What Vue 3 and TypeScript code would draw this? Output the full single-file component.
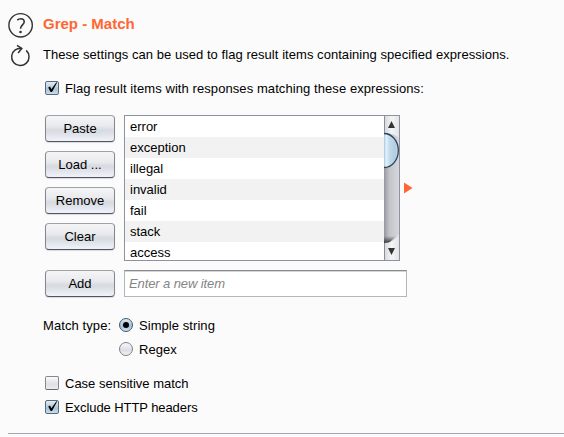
<script setup lang="ts">
import { ref } from 'vue'

const items: string[] = ['error', 'exception', 'illegal', 'invalid', 'fail', 'stack', 'access']
const actions: string[] = ['Paste', 'Load ...', 'Remove', 'Clear']
const flagItems = ref(true)
const caseSensitive = ref(false)
const excludeHeaders = ref(true)
const matchType = ref<'simple' | 'regex'>('simple')
const newItem = ref('')
const tick = 'M3.2 6.4 5 5.6 6.4 8.3 11.2 1.4 12.3 1.3 7 11 5.6 11Z'
</script>

<template>
  <main class="panel">
    <aside class="tools">
      <svg class="help" width="26" height="26" viewBox="0 0 26 26" fill="none" stroke="#333">
        <circle cx="12.6" cy="13.3" r="11.7" stroke-width="1.4" />
        <path d="M9.3 8.1C10.2 7.2 11.2 6.8 12.7 6.8c2.2 0 3.5 1.1 3.5 3 0 3-3.7 3.3-3.7 6.9" stroke-width="1.6" />
        <circle cx="12.5" cy="20" r="1.3" fill="#333" stroke="none" />
      </svg>
      <svg class="reset" width="22" height="23" viewBox="0 0 22 23" fill="none" stroke="#333" stroke-width="1.5">
        <path d="M16.2 6.4A8.7 8.7 0 1 1 5.2 5.8Q7.6 4.4 11.4 4.5" />
        <path d="M7 1.4 11.8 4.5 8.1 9" />
      </svg>
    </aside>
    <section class="content">
      <h1>Grep - Match</h1>
      <p class="intro">These settings can be used to flag result items containing specified expressions.</p>
      <label class="check-row flag" @click="flagItems = !flagItems">
        <span class="box" :class="{ on: flagItems }">
          <svg v-if="flagItems" width="14" height="14" viewBox="0 0 14 14"><path :d="tick" /></svg>
        </span>
        <span class="text">Flag result items with responses matching these expressions:</span>
      </label>

      <div class="editor">
        <div class="actions">
          <button v-for="action in actions" :key="action" type="button">{{ action }}</button>
        </div>
        <div class="list">
          <ul>
            <li v-for="item in items" :key="item">{{ item }}</li>
          </ul>
          <svg class="scroll" width="15" height="144" viewBox="0 0 15 144">
            <defs>
              <linearGradient id="track"><stop stop-color="#96979e" /><stop offset=".35" stop-color="#c3c4ca" /><stop offset="1" stop-color="#d6d7dc" /></linearGradient>
              <linearGradient id="end"><stop stop-color="#d2d5d9" /><stop offset=".5" stop-color="#f4f5f6" /><stop offset="1" stop-color="#e2e4e7" /></linearGradient>
              <linearGradient id="thumb"><stop stop-color="#a6c5df" /><stop offset=".15" stop-color="#e6f2fb" /><stop offset=".4" stop-color="#c0daec" /><stop offset=".8" stop-color="#b2cce0" /><stop offset="1" stop-color="#d0e7f5" /></linearGradient>
              <linearGradient id="shade" x2="0" y2="1"><stop stop-color="#444" stop-opacity="0" /><stop offset="1" stop-color="#333" /></linearGradient>
            </defs>
            <rect width="15" height="144" fill="url(#track)" />
            <path d="M0 0H15V22Q10 17 0 17Z" fill="url(#end)" />
            <path d="M0 120H12L5 127H0Z" fill="url(#shade)" />
            <path d="M0 127Q10 127 15 118V144H0Z" fill="url(#end)" />
            <path d="M0 17.5C8 17.5 14.3 25 14.3 34.5S8 51.5 0 51.5Z" fill="url(#thumb)" />
            <path d="M0 17.5C8 17.5 14.3 25 14.3 34.5S8 51.5 0 51.5" fill="none" stroke="#284359" stroke-width="1.3" />
            <path d="M.5 0V17M.5 127V144" stroke="#8c8f98" />
            <path d="M7.5 5 11 12H4ZM4 132H11L7.5 139Z" fill="#333" />
          </svg>
        </div>
        <svg class="pointer" width="9" height="12" viewBox="0 0 9 12"><path d="M0 .5V11.5L8.5 6Z" fill="#ff6633" /></svg>
      </div>

      <div class="add-row">
        <button type="button">Add</button>
        <input v-model="newItem" type="text" placeholder="Enter a new item" />
      </div>

      <div class="match">
        <span class="match-label">Match type:</span>
        <div class="choices">
          <label @click="matchType = 'simple'"><span class="radio" :class="{ on: matchType === 'simple' }"></span><span class="text">Simple string</span></label>
          <label @click="matchType = 'regex'"><span class="radio" :class="{ on: matchType === 'regex' }"></span><span class="text">Regex</span></label>
        </div>
      </div>

      <label class="check-row case" @click="caseSensitive = !caseSensitive">
        <span class="box" :class="{ on: caseSensitive }">
          <svg v-if="caseSensitive" width="14" height="14" viewBox="0 0 14 14"><path :d="tick" /></svg>
        </span>
        <span class="text">Case sensitive match</span>
      </label>
      <label class="check-row exclude" @click="excludeHeaders = !excludeHeaders">
        <span class="box" :class="{ on: excludeHeaders }">
          <svg v-if="excludeHeaders" width="14" height="14" viewBox="0 0 14 14"><path :d="tick" /></svg>
        </span>
        <span class="text">Exclude HTTP headers</span>
      </label>
    </section>
    <hr />
  </main>
</template>

<style>
body { background: #fbfbfb; overflow: hidden; }
</style>

<style scoped>
* { box-sizing: border-box; }
.panel {
  display: grid;
  grid-template-columns: 35px 1fr;
  grid-template-rows: 433px auto;
  padding-left: 8px;
  height: 437px;
  overflow: hidden;
  font: 13px/20px "Liberation Sans", Arial, sans-serif;
  color: #000;
}
.tools { padding-top: 12px; }
.tools svg { display: block; }
.reset { margin: 6px 0 0 2px; }
.content { padding-top: 14px; white-space: nowrap; }
h1 { margin: 0; font-size: 15px; line-height: 20px; color: #ff6633; }
.intro { margin: 11px 0 0; letter-spacing: .05px; }
.check-row { display: flex; align-items: center; gap: 6px; height: 20px; padding-left: 2px; }
.text { margin-top: 2px; }
.flag { margin-top: 13px; }
.flag .text { letter-spacing: .08px; }
.box {
  display: block;
  width: 14px;
  height: 14px;
  flex: none;
  border: 1px solid #85888f;
  border-bottom-color: #66686e;
  border-radius: 2px;
  background: linear-gradient(#fafafa, #dfe1e5 60%, #ededf0);
}
.box svg { display: block; margin: -1px; }
.box.on { border-color: #586b7d; background: linear-gradient(#e5edf4, #acc3d6 60%, #c7dceb); }
.editor { display: flex; margin-top: 17px; padding-left: 2px; height: 146px; }
.actions { display: flex; flex-direction: column; gap: 9px; width: 70px; }
button {
  width: 70px;
  height: 27px;
  padding: 0;
  border: 1px solid #85878f;
  border-top-color: #a0a1a7;
  border-bottom-color: #51545d;
  border-radius: 4px;
  background: linear-gradient(#f5f5f7, #e9eaed 40%, #d6d9df 57%, #e3e6ec 80%, #f0f3f9);
  box-shadow: 0 1px 1px #d9dade;
  font: 13px/20px "Liberation Sans", Arial, sans-serif;
  color: #000;
}
.list { display: flex; width: 276px; height: 146px; margin-left: 9px; border: 1px solid #9091a0; background: #fff; overflow: hidden; }
ul { list-style: none; margin: 0; padding: 0; width: 259px; flex: none; }
li { height: 21px; line-height: 21px; padding-left: 5px; }
li:nth-child(even) { background: #f2f2f2; }
.scroll { display: block; flex: none; }
.pointer { margin: 67px 0 0 4px; }
.add-row { display: flex; gap: 9px; margin-top: 9px; padding-left: 2px; }
input {
  width: 283px;
  height: 27px;
  padding: 0 4px;
  border: 1px solid #b4b5b9;
  border-top: 1px solid #898b90;
  border-radius: 0;
  outline: none;
  background: #fff;
  box-shadow: inset 0 1px #d5d5d8;
  font: italic 13px/20px "Liberation Sans", Arial, sans-serif;
  letter-spacing: -.1px;
}
input::placeholder { color: #858585; opacity: 1; }
.match { display: flex; margin-top: 18px; }
.match-label { width: 76px; padding-top: 1px; letter-spacing: .09px; }
.choices { display: flex; flex-direction: column; gap: 4px; }
.choices label { display: flex; align-items: center; gap: 6px; height: 20px; letter-spacing: .06px; }
.radio { display: grid; place-items: center; width: 14px; height: 14px; border: 1px solid #7e8188; border-radius: 50%; background: linear-gradient(#f8f8fa, #dcdee2 60%, #f2f3f5); }
.radio.on { border-color: #40576b; background: linear-gradient(#dce8f1, #a4bed2 60%, #cde3f2); }
.radio.on::after { content: ""; width: 6px; height: 6px; border-radius: 50%; background: #000; }
.case { margin-top: 14px; }
.exclude { margin-top: 4px; letter-spacing: -.08px; }
hr { grid-column: 1 / -1; width: 100%; height: 1px; margin: 0; border: 0; background: #a2a5b0; }
</style>
